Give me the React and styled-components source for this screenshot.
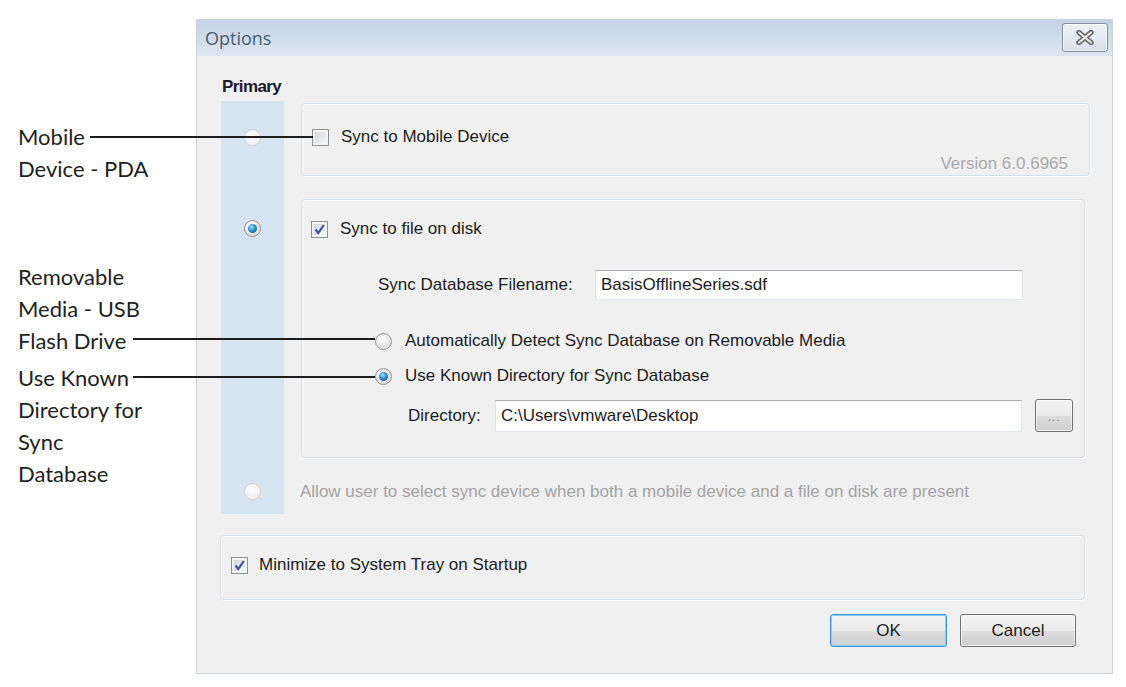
import React from "react";
import styled, { createGlobalStyle } from "styled-components";

const GlobalStyle = createGlobalStyle`
  html, body {
    margin: 0;
    padding: 0;
    background: #fff;
  }
  * {
    box-sizing: border-box;
  }
`;

const Page = styled.div`
  position: relative;
  width: 1126px;
  height: 687px;
  display: flex;
  align-items: flex-start;
  overflow: hidden;
`;

/* left hand notes with their leader lines */
const Callouts = styled.div`
  width: 196px;
  flex-shrink: 0;
  padding: 121px 0 0 18px;
  font-family: Lato, "Liberation Sans", sans-serif;
  font-size: 22px;
  line-height: 32px;
  color: #231f20;
`;

const Callout = styled.div`
  margin-top: ${(p) => p.$gap || 0}px;
`;

const Leader = styled.div`
  position: absolute;
  z-index: 3;
  left: ${(p) => p.$x}px;
  top: ${(p) => p.$y}px;
  width: ${(p) => p.$w}px;
  height: 2px;
  background: #1d1d1d;
`;

/* the dialog window */
const Dialog = styled.div`
  margin-top: 19px;
  width: 917px;
  height: 655px;
  flex-shrink: 0;
  display: flex;
  flex-direction: column;
  background: #f0f0f0;
  border: 1px solid #c9d3dd;
  font-family: "Liberation Sans", Arial, sans-serif;
  font-size: 17px;
  color: #1c1c1c;
`;

const TitleBar = styled.div`
  height: 36px;
  flex-shrink: 0;
  display: flex;
  align-items: flex-start;
  justify-content: space-between;
  padding: 0 4px 0 8px;
  background: linear-gradient(#c3d3e5, #dce6f1);
`;

const Title = styled.div`
  font-family: "Open Sans", sans-serif;
  font-size: 18px;
  line-height: 36px;
  color: #4b5b6d;
`;

const CloseButton = styled.div`
  margin-top: 3px;
  width: 46px;
  height: 29px;
  display: flex;
  align-items: center;
  justify-content: center;
  border: 1px solid #8090a2;
  border-radius: 3px;
  background: linear-gradient(#eef2f7, #d8e1eb);
  box-shadow: inset 0 0 0 1px rgba(255, 255, 255, 0.6);
`;

const Body = styled.div`
  flex: 1;
  display: flex;
  flex-direction: column;
  padding: 0 27px 0 24px;
`;

const Heading = styled.div`
  margin: 21px 0 4px 1px;
  font-weight: bold;
  font-size: 17px;
  line-height: 20px;
  letter-spacing: -0.6px;
  color: #1d1a28;
`;

const Choices = styled.div`
  display: grid;
  grid-template-columns: 63px 1fr;
  column-gap: 17px;
`;

const Strip = styled.div`
  grid-column: 1;
  grid-row: 1 / 4;
  background: #d6e3f0;
`;

const RadioCell = styled.div`
  grid-column: 1;
  grid-row: ${(p) => p.$row};
  justify-self: center;
  padding-top: ${(p) => p.$top}px;
`;

const Panel = styled.div`
  grid-column: ${(p) => (p.$row ? 2 : "auto")};
  grid-row: ${(p) => p.$row || "auto"};
  height: ${(p) => p.$h}px;
  margin-top: ${(p) => p.$mt || 0}px;
  margin-right: ${(p) => p.$mr || 0}px;
  margin-left: ${(p) => p.$ml || 0}px;
  padding: ${(p) => p.$pad};
  border: 1px solid #d5dfe5;
  border-radius: 4px;
  box-shadow: inset 1px 1px 0 #fbfbfb, 1px 1px 0 #fbfbfb;
  display: flex;
  flex-direction: column;
`;

const Row = styled.div`
  display: flex;
  align-items: center;
  gap: ${(p) => p.$gap || 12}px;
  height: 20px;
  line-height: 20px;
  white-space: nowrap;
  margin-top: ${(p) => p.$mt || 0}px;
  margin-left: ${(p) => p.$ml || 0}px;
`;

const FieldRow = styled.div`
  display: grid;
  grid-template-columns: ${(p) => p.$cols};
  align-items: center;
  column-gap: 13px;
  margin-top: ${(p) => p.$mt}px;
  margin-left: ${(p) => p.$ml}px;
`;

const Muted = styled.div`
  color: ${(p) => p.$tone || "#a9a9a9"};
  line-height: 20px;
  white-space: nowrap;
`;

const Version = styled(Muted)`
  margin-top: 7px;
  text-align: right;
  padding-right: 21px;
`;

const AllowCell = styled.div`
  grid-column: 2;
  grid-row: 3;
  height: 56px;
  padding-top: 24px;
  margin-left: -1px;
`;

const TextBox = styled.div`
  height: ${(p) => p.$h}px;
  padding: 0 5px;
  display: flex;
  align-items: center;
  background: #fff;
  border: 1px solid;
  border-color: #abadb3 #e2e3ea #e3e9ef #dbdfe6;
  white-space: nowrap;
`;

const BrowseButton = styled.div`
  height: 33px;
  display: flex;
  align-items: center;
  justify-content: center;
  border: 1px solid #707070;
  border-radius: 3px;
  background: linear-gradient(#f2f2f2 0%, #ebebeb 50%, #dddddd 51%, #cfcfcf 100%);
  box-shadow: inset 0 0 0 1px rgba(255, 255, 255, 0.7);
  font-size: 12px;
  color: #777;
  letter-spacing: 1px;
  padding-top: 3px;
`;

const Buttons = styled.div`
  display: flex;
  justify-content: flex-end;
  gap: 13px;
  margin-top: 14px;
  padding-right: 9px;
`;

const Button = styled.div`
  width: ${(p) => p.$w}px;
  height: 33px;
  display: flex;
  align-items: center;
  justify-content: center;
  border: 1px solid ${(p) => (p.$default ? "#3c8fcf" : "#707070")};
  border-radius: 3px;
  background: linear-gradient(#f2f2f2 0%, #ebebeb 50%, #dddddd 51%, #cfcfcf 100%);
  box-shadow: inset 0 0 0 1px
    ${(p) => (p.$default ? "#7fd0f5" : "rgba(255, 255, 255, 0.7)")};
  color: #1c1c1c;
`;

const Box = styled.span`
  width: 17px;
  height: 17px;
  flex-shrink: 0;
  display: inline-flex;
  align-items: center;
  justify-content: center;
  border: 1px solid #8e8f8f;
  box-shadow: inset 0 0 0 2px #f4f4f4;
  background: linear-gradient(135deg, #c9ced5 0%, #e6e8eb 55%, #fbfbfb 100%);
`;

const Round = styled.span`
  position: relative;
  width: 17px;
  height: 17px;
  flex-shrink: 0;
  display: inline-block;
  border-radius: 50%;
  border: 1px solid ${(p) => (p.$disabled ? "#d2d2d2" : "#929292")};
  background: ${(p) =>
    p.$disabled
      ? "radial-gradient(circle at 40% 35%, #fdfdfd, #ececec)"
      : "radial-gradient(circle at 40% 35%, #ffffff, #d2d2d2)"};
`;

const Dot = styled.span`
  position: absolute;
  left: 3px;
  top: 3px;
  width: 9px;
  height: 9px;
  border-radius: 50%;
  background: radial-gradient(circle at 40% 35%, #9fe6ff 0%, #2a8fd0 45%, #0c4a80 100%);
`;

const Checkbox = ({ checked }) => (
  <Box>
    {checked && (
      <svg width="13" height="13" viewBox="0 0 13 13">
        <path
          d="M2.5 6.5 L5.2 10.2 L10.8 2"
          fill="none"
          stroke="#3f5297"
          strokeWidth="2.2"
          strokeLinejoin="round"
        />
      </svg>
    )}
  </Box>
);

const Radio = ({ checked, disabled }) => (
  <Round $disabled={disabled}>{checked && <Dot />}</Round>
);

const CloseGlyph = () => (
  <svg width="20" height="15" viewBox="0 0 20 15">
    <path d="M4 2.5 L16 12.5 M16 2.5 L4 12.5" stroke="#6e6e6e" strokeWidth="5.5" strokeLinecap="round" />
    <path d="M4 2.5 L16 12.5 M16 2.5 L4 12.5" stroke="#e9e9e9" strokeWidth="2" strokeLinecap="round" />
  </svg>
);

export default function App() {
  return (
    <Page>
      <GlobalStyle />
      <Callouts>
        <Callout>Mobile</Callout>
        <Callout>Device - PDA</Callout>
        <Callout $gap={76}>Removable</Callout>
        <Callout>Media - USB</Callout>
        <Callout>Flash Drive</Callout>
        <Callout $gap={5}>Use Known</Callout>
        <Callout>Directory for</Callout>
        <Callout>Sync</Callout>
        <Callout>Database</Callout>
      </Callouts>
      <Leader $x={90} $y={136} $w={223} />
      <Leader $x={133} $y={338} $w={242} />
      <Leader $x={133} $y={376} $w={242} />

      <Dialog>
        <TitleBar>
          <Title>Options</Title>
          <CloseButton>
            <CloseGlyph />
          </CloseButton>
        </TitleBar>

        <Body>
          <Heading>Primary</Heading>
          <Choices>
            <Strip />

            <RadioCell $row={1} $top={28}>
              <Radio disabled />
            </RadioCell>
            <Panel $row={1} $h={73} $mt={2} $mr={-5} $pad="23px 0 0 10px">
              <Row>
                <Checkbox />
                Sync to Mobile Device
              </Row>
              <Version>Version 6.0.6965</Version>
            </Panel>

            <RadioCell $row={2} $top={44}>
              <Radio checked />
            </RadioCell>
            <Panel $row={2} $h={259} $mt={23} $pad="19px 0 0 9px">
              <Row>
                <Checkbox checked />
                Sync to file on disk
              </Row>
              <FieldRow $cols="204px 428px" $mt={31} $ml={67}>
                <span>Sync Database Filename:</span>
                <TextBox $h={30}>BasisOfflineSeries.sdf</TextBox>
              </FieldRow>
              <Row $gap={13} $mt={31} $ml={64}>
                <Radio />
                Automatically Detect Sync Database on Removable Media
              </Row>
              <Row $gap={13} $mt={15} $ml={64}>
                <Radio checked />
                Use Known Directory for Sync Database
              </Row>
              <FieldRow $cols="74px 527px 38px" $mt={13} $ml={97}>
                <span>Directory:</span>
                <TextBox $h={32}>{"C:\\Users\\vmware\\Desktop"}</TextBox>
                <BrowseButton>...</BrowseButton>
              </FieldRow>
            </Panel>

            <RadioCell $row={3} $top={25}>
              <Radio disabled />
            </RadioCell>
            <AllowCell>
              <Muted $tone="#a3a3a3">
                Allow user to select sync device when both a mobile device and a file on disk are present
              </Muted>
            </AllowCell>
          </Choices>

          <Panel $h={65} $mt={21} $ml={-1} $pad="19px 0 0 10px">
            <Row $gap={11}>
              <Checkbox checked />
              Minimize to System Tray on Startup
            </Row>
          </Panel>

          <Buttons>
            <Button $w={117} $default>
              OK
            </Button>
            <Button $w={116}>Cancel</Button>
          </Buttons>
        </Body>
      </Dialog>
    </Page>
  );
}
